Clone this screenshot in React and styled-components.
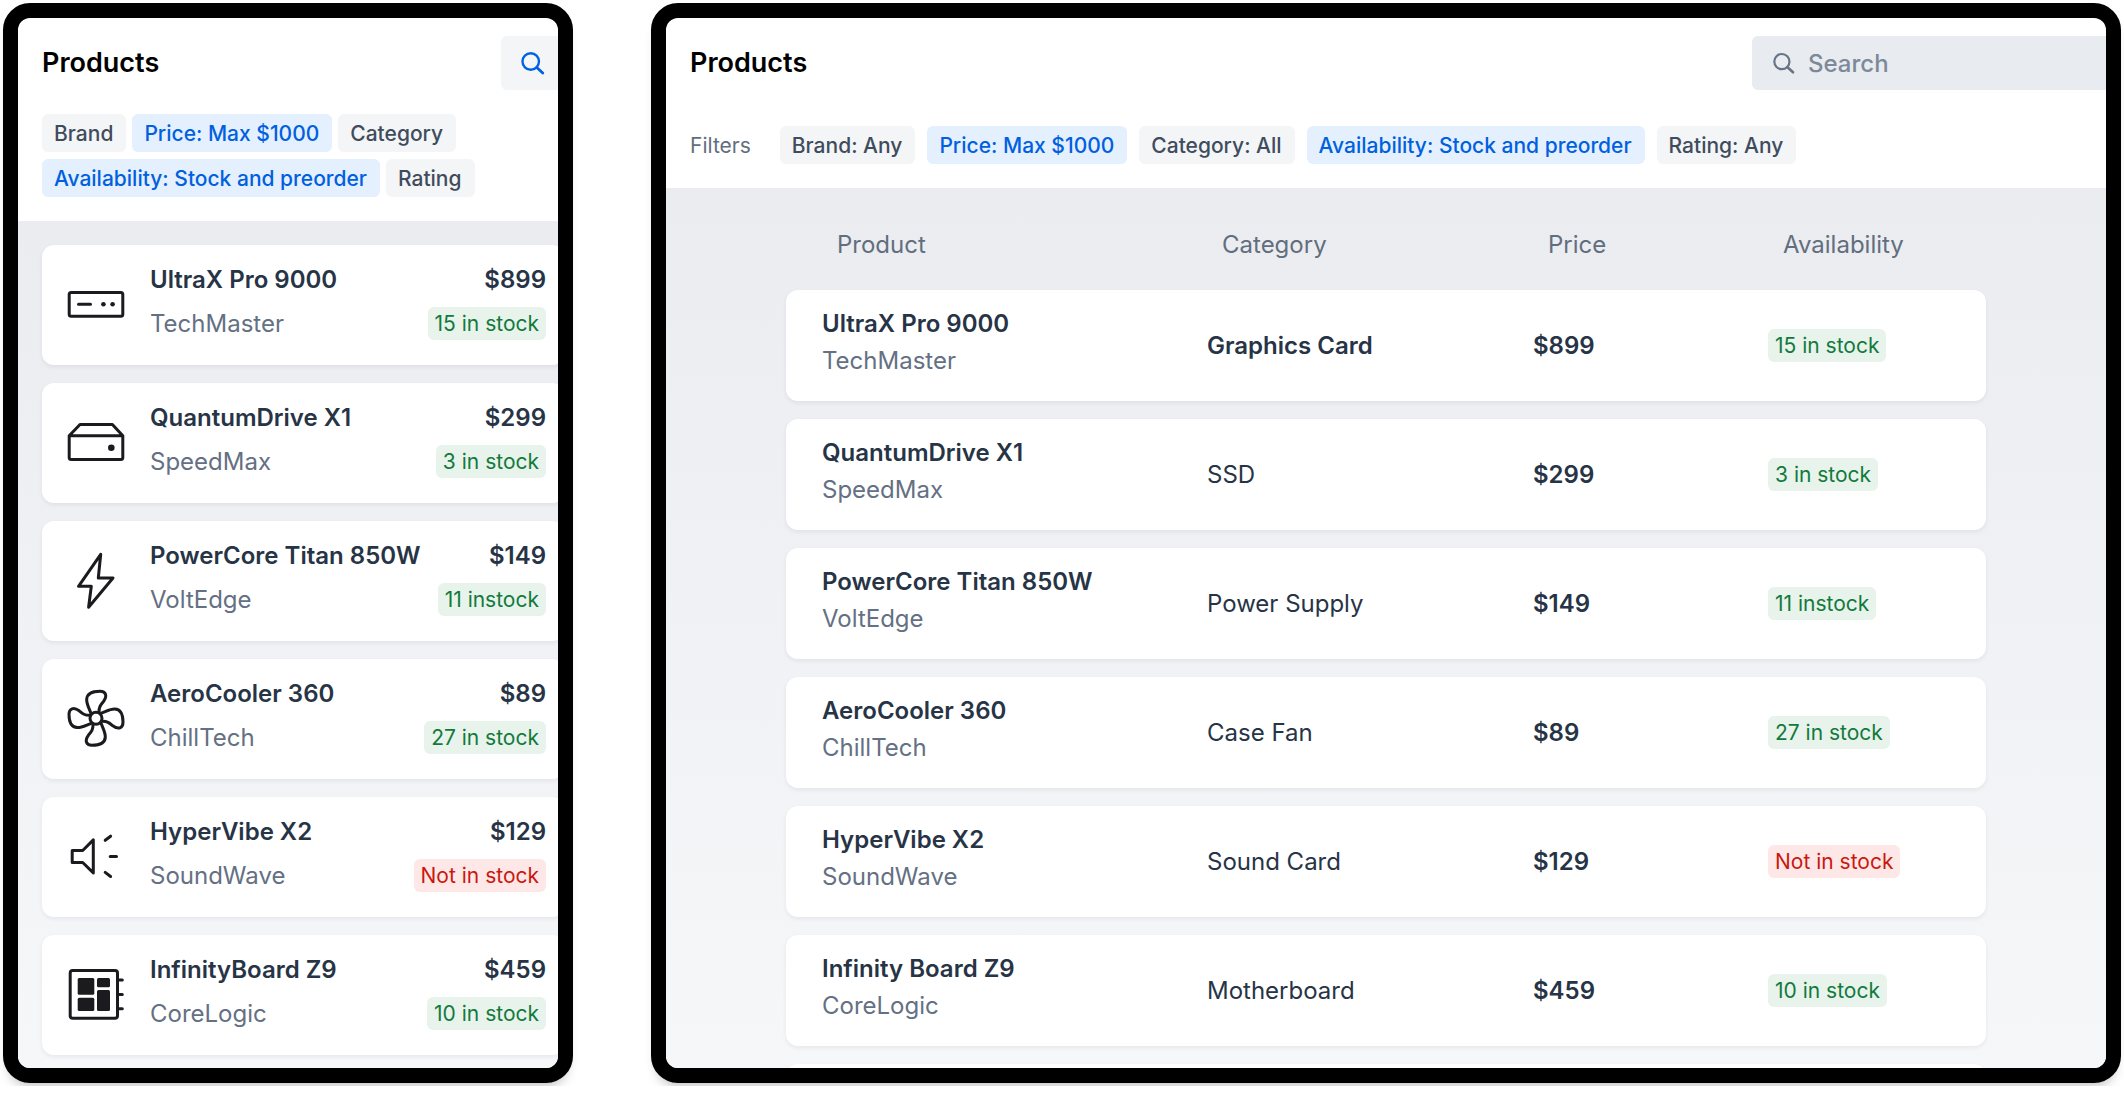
import React from 'react';
import styled, { createGlobalStyle, css } from 'styled-components';

const GlobalStyle = createGlobalStyle`
  *, *::before, *::after { box-sizing: border-box; }
  body {
    margin: 0;
    background: #fff;
    color: #273446;
    font-family: Inter, "Liberation Sans", sans-serif;
    font-size: 24px;
    -webkit-font-smoothing: antialiased;
  }
  button, input { font: inherit; }
`;

const Page = styled.main`
  display: flex;
  gap: 78px;
  padding: 3px;
`;

const Frame = styled.section`
  flex: ${(p) => (p.$narrow ? '0 0 570px' : '1 1 0')};
  min-width: 0;
  height: calc(100vh - 30px);
  border: 15px solid #000;
  border-radius: 27px;
  background: #fff;
  overflow: hidden;
  box-shadow: 0 9px 12px -6px rgba(0, 0, 0, 0.25);
`;

/* The app is a little wider than the screen opening and is cut off on the right. */
const Screen = styled.div`
  display: flex;
  flex-direction: column;
  width: calc(100% + 30px);
  height: 100%;
`;

const Header = styled.header`
  display: flex;
  flex-direction: column;
  gap: ${(p) => (p.$narrow ? 24 : 36)}px;
  padding: 18px 24px 24px;
`;

const TitleBar = styled.div`
  display: flex;
  align-items: center;
  justify-content: space-between;
`;

const Title = styled.h1`
  margin: 0;
  color: #000;
  font-size: 27px;
  font-weight: 600;
  line-height: 36px;
`;

const IconButton = styled.button`
  display: grid;
  place-items: center;
  width: 63px;
  height: 54px;
  padding: 0;
  border: 0;
  border-radius: 6px;
  background: #f3f5f7;
  color: #0062e3;
`;

const SearchField = styled.label`
  display: flex;
  align-items: center;
  gap: 12px;
  width: 360px;
  height: 54px;
  padding: 0 20px;
  border-radius: 6px;
  background: #e8ebef;
  color: #667485;
`;

const SearchInput = styled.input`
  flex: 1;
  min-width: 0;
  padding: 0;
  border: 0;
  outline: 0;
  background: none;
  color: #273446;
  font-weight: 500;
  &::placeholder { color: #7b8999; opacity: 1; }
`;

const FilterBar = styled.div`
  display: flex;
  align-items: center;
  gap: 29px;
`;

const FilterLabel = styled.span`
  color: #626e7e;
  font-size: 21px;
`;

const Chips = styled.div`
  display: flex;
  flex-wrap: wrap;
  gap: ${(p) => (p.$narrow ? '7px 6px' : '12px')};
`;

const Chip = styled.button`
  height: 38px;
  padding: 1px 13px 0 12px;
  border: 0;
  border-radius: 6px;
  background: ${(p) => (p.$active ? '#e4f0fe' : '#f3f5f7')};
  color: ${(p) => (p.$active ? '#0060df' : '#3f4c5d')};
  font-size: 21px;
  font-weight: 500;
  line-height: 37px;
  white-space: nowrap;
`;

const Body = styled.div`
  flex: 1;
  min-height: 0;
  padding: ${(p) => (p.$narrow ? '24px' : '36px 150px 0 120px')};
  background: linear-gradient(#eaecf0, #f6f7f9);
`;

const surface = css`
  border-radius: 12px;
  background: #fff;
  box-shadow: 0 2px 4px rgba(28, 48, 74, 0.07);
`;

const CardList = styled.ul`
  display: flex;
  flex-direction: column;
  gap: 18px;
  margin: 0;
  padding: 0;
  list-style: none;
`;

const Card = styled.li`
  ${surface}
  display: flex;
  align-items: center;
  gap: 18px;
  min-height: 120px;
  padding: 18px;
`;

const CardText = styled.div`
  flex: 1;
  display: flex;
  flex-direction: column;
  align-self: flex-start;
  gap: 12px;
`;

const CardLine = styled.div`
  display: flex;
  align-items: center;
  justify-content: space-between;
  height: 32px;
`;

const Strong = styled.span`
  font-weight: 600;
`;

const Maker = styled.span`
  color: #647083;
`;

const Badge = styled.span`
  display: inline-block;
  height: 33px;
  padding: 0 7px;
  border-radius: 6px;
  background: ${(p) => (p.$error ? '#fde8e7' : '#e8f3eb')};
  color: ${(p) => (p.$error ? '#ca1810' : '#127a3d')};
  font-size: 21px;
  line-height: 33px;
  white-space: nowrap;
`;

const Table = styled.table`
  display: block;
`;

const TableHead = styled.thead`
  display: block;
`;

const TableBody = styled.tbody`
  display: flex;
  flex-direction: column;
  gap: 18px;
`;

const columns = css`
  display: grid;
  grid-template-columns: 385fr 326fr 235fr 182fr;
  align-items: center;
`;

const HeadRow = styled.tr`
  ${columns}
  padding: 0 21px 24px 51px;
`;

const HeadCell = styled.th`
  padding: 0;
  color: #626e7e;
  font-weight: 400;
  line-height: 42px;
  text-align: left;
`;

const Row = styled.tr`
  ${surface}
  ${columns}
  min-height: 111px;
  padding: 0 36px;
`;

const Cell = styled.td`
  padding: 0;
  font-weight: ${(p) => (p.$strong ? 600 : 400)};
`;

const NameCell = styled(Cell)`
  display: flex;
  flex-direction: column;
  padding: 15px 0 22px;
  line-height: 37px;
`;

const Icon = styled.svg`
  display: block;
  flex: none;
  width: 72px;
  height: 72px;
  fill: none;
  stroke: #1b1b1f;
  stroke-width: 3;
  stroke-linecap: round;
  stroke-linejoin: round;
`;

const SearchIcon = ({ size = 24 }) => (
  <svg width={size} height={size} viewBox="0 0 24 24" fill="none" stroke="currentColor" strokeWidth="2.2" strokeLinecap="round" aria-hidden="true">
    <circle cx="9.900" cy="10.600" r="7.600" />
    <path d="M15.500 16.200 21 21.300" strokeWidth="2.600" />
  </svg>
);

const blade = 'M31 30.5C29 25 26.5 21 26.7 16.500C27 10 32 8.300 40 8.300C46 8.300 47.500 13 43.500 18.500C40.500 22 38.800 24 39 29.500';

const icons = {
  gpu: (
    <>
      <rect x="9.200" y="23.500" width="53.600" height="23.700" rx="2" />
      <path d="M18.500 35.300H30.500" />
      <g fill="#1b1b1f" stroke="none">
        <circle cx="43.400" cy="35.300" r="2.300" />
        <circle cx="52.600" cy="35.300" r="2.300" />
      </g>
    </>
  ),
  drive: (
    <>
      <path d="M9.200 28.800H62.800V50.600a2 2 0 0 1-2 2H11.200a2 2 0 0 1-2-2ZL20 17.500H52.400L62.800 28.800" />
      <circle cx="51.300" cy="40.700" r="3.300" fill="#1b1b1f" stroke="none" />
    </>
  ),
  bolt: <path d="M40.700 9.300 18.500 41.300H31.300L28.600 62.300 53 33H38.300Z" />,
  fan: (
    <>
      {[0, 90, 180, 270].map((angle) => (
        <path key={angle} d={blade} transform={`rotate(${angle} 36 35.300)`} />
      ))}
      <circle cx="36" cy="35.300" r="6" />
    </>
  ),
  speaker: (
    <>
      <path d="M12.200 29.500H22.700L33.300 18.900V51.900L22.700 41.500H12.200Z" />
      <path d="M45.200 19.300 50.600 15.200M50.200 35.400H56.500M45.200 51.400 50.600 55.500" />
    </>
  ),
  board: (
    <>
      <rect x="10.200" y="11.500" width="47.300" height="47.700" rx="2.500" />
      <path d="M58 21H62.300M58 35.400H62.300M58 49.700H62.300" />
      <g fill="#1b1b1f" stroke="none">
        <rect x="17.700" y="19" width="16.600" height="16.700" rx="1.500" />
        <rect x="37" y="19" width="13" height="9.300" rx="1.500" />
        <rect x="17.700" y="38.700" width="16.600" height="13.300" rx="1.500" />
        <rect x="37" y="31" width="13" height="21" rx="1.500" />
      </g>
    </>
  ),
};

const products = [
  { icon: 'gpu', name: 'UltraX Pro 9000', maker: 'TechMaster', category: 'Graphics Card', price: '$899', stock: '15 in stock', highlight: true },
  { icon: 'drive', name: 'QuantumDrive X1', maker: 'SpeedMax', category: 'SSD', price: '$299', stock: '3 in stock' },
  { icon: 'bolt', name: 'PowerCore Titan 850W', maker: 'VoltEdge', category: 'Power Supply', price: '$149', stock: '11 instock' },
  { icon: 'fan', name: 'AeroCooler 360', maker: 'ChillTech', category: 'Case Fan', price: '$89', stock: '27 in stock' },
  { icon: 'speaker', name: 'HyperVibe X2', maker: 'SoundWave', category: 'Sound Card', price: '$129', stock: 'Not in stock', out: true },
  { icon: 'board', name: 'InfinityBoard Z9', wideName: 'Infinity Board Z9', maker: 'CoreLogic', category: 'Motherboard', price: '$459', stock: '10 in stock' },
];

const narrowFilters = [
  ['Brand'],
  ['Price: Max $1000', true],
  ['Category'],
  ['Availability: Stock and preorder', true],
  ['Rating'],
];

const wideFilters = [
  ['Brand: Any'],
  ['Price: Max $1000', true],
  ['Category: All'],
  ['Availability: Stock and preorder', true],
  ['Rating: Any'],
];

const FilterChips = ({ filters, narrow }) => (
  <Chips $narrow={narrow}>
    {filters.map(([label, active]) => (
      <Chip key={label} type="button" $active={active}>{label}</Chip>
    ))}
  </Chips>
);

const NarrowView = () => (
  <Frame $narrow>
    <Screen>
      <Header $narrow>
        <TitleBar>
          <Title>Products</Title>
          <IconButton type="button" aria-label="Search"><SearchIcon size={26} /></IconButton>
        </TitleBar>
        <FilterChips filters={narrowFilters} narrow />
      </Header>
      <Body $narrow>
        <CardList>
          {products.map((p) => (
            <Card key={p.name}>
              <Icon viewBox="0 0 72 72" aria-hidden="true">{icons[p.icon]}</Icon>
              <CardText>
                <CardLine>
                  <Strong>{p.name}</Strong>
                  <Strong>{p.price}</Strong>
                </CardLine>
                <CardLine>
                  <Maker>{p.maker}</Maker>
                  <Badge $error={p.out}>{p.stock}</Badge>
                </CardLine>
              </CardText>
            </Card>
          ))}
        </CardList>
      </Body>
    </Screen>
  </Frame>
);

const WideView = () => (
  <Frame>
    <Screen>
      <Header>
        <TitleBar>
          <Title>Products</Title>
          <SearchField>
            <SearchIcon />
            <SearchInput type="text" placeholder="Search" aria-label="Search" />
          </SearchField>
        </TitleBar>
        <FilterBar>
          <FilterLabel>Filters</FilterLabel>
          <FilterChips filters={wideFilters} />
        </FilterBar>
      </Header>
      <Body>
        <Table>
          <TableHead>
            <HeadRow>
              <HeadCell scope="col">Product</HeadCell>
              <HeadCell scope="col">Category</HeadCell>
              <HeadCell scope="col">Price</HeadCell>
              <HeadCell scope="col">Availability</HeadCell>
            </HeadRow>
          </TableHead>
          <TableBody>
            {products.map((p) => (
              <Row key={p.name}>
                <NameCell>
                  <Strong>{p.wideName || p.name}</Strong>
                  <Maker>{p.maker}</Maker>
                </NameCell>
                <Cell $strong={p.highlight}>{p.category}</Cell>
                <Cell $strong>{p.price}</Cell>
                <Cell><Badge $error={p.out}>{p.stock}</Badge></Cell>
              </Row>
            ))}
            <Row aria-hidden="true"><Cell /></Row>
          </TableBody>
        </Table>
      </Body>
    </Screen>
  </Frame>
);

export default function App() {
  return (
    <>
      <GlobalStyle />
      <Page>
        <NarrowView />
        <WideView />
      </Page>
    </>
  );
}
